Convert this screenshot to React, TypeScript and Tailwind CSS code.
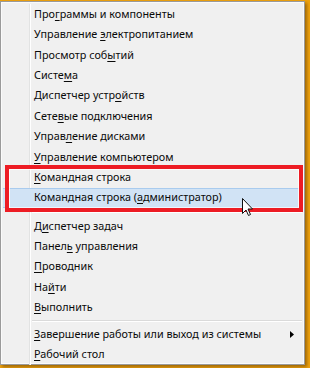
import React from "react";

type Item = { pre: string; key: string; post: string; hot?: boolean; sub?: boolean };

const group1: Item[] = [
  { pre: "Про", key: "г", post: "раммы и компоненты" },
  { pre: "Управление ", key: "э", post: "лектропитанием" },
  { pre: "Просмотр соб", key: "ы", post: "тий" },
  { pre: "Систе", key: "м", post: "а" },
  { pre: "Диспетчер устр", key: "о", post: "йств" },
  { pre: "Сете", key: "в", post: "ые подключения" },
  { pre: "Управ", key: "л", post: "ение дисками" },
  { pre: "", key: "У", post: "правление компьютером" },
  { pre: "", key: "К", post: "омандная строка" },
  { pre: "Командная строка (", key: "а", post: "дминистратор)", hot: true },
];

const group2: Item[] = [
  { pre: "Д", key: "и", post: "спетчер задач" },
  { pre: "Панел", key: "ь", post: " управления" },
  { pre: "", key: "П", post: "роводник" },
  { pre: "На", key: "й", post: "ти" },
  { pre: "", key: "В", post: "ыполнить" },
];

const group3: Item[] = [
  { pre: "", key: "З", post: "авершение работы или выход из системы", sub: true },
  { pre: "", key: "Р", post: "абочий стол" },
];

function Row({ item }: { item: Item }) {
  return (
    <div
      className={
        "flex h-[20.4px] items-center " +
        (item.hot ? "bg-[#d1e3f5] border-y border-[#a9cbee]" : "")
      }
    >
      <div
        className={
          "w-[27px] h-full shrink-0 border-r " +
          (item.hot ? "border-transparent" : "border-[#e2e3e3] shadow-[1px_0_0_#ffffff]")
        }
      />
      <span className="pl-[4px] flex-1 whitespace-nowrap">
        {item.pre}
        <span className="underline underline-offset-[2px]">{item.key}</span>
        {item.post}
      </span>
      {item.sub && (
        <svg width="4" height="7" viewBox="0 0 4 7" className="mr-[8px]">
          <path d="M0 0 L4 3.5 L0 7 Z" fill="#000" />
        </svg>
      )}
    </div>
  );
}

function Separator({ h }: { h: string }) {
  return (
    <div className={"flex " + h}>
      <div className="w-[27px] shrink-0 border-r border-[#e2e3e3] shadow-[1px_0_0_#ffffff]" />
      <div className="flex-1 flex flex-col justify-center pl-[2px]">
        <div className="h-px bg-[#dadada]" />
        <div className="h-px bg-white" />
      </div>
    </div>
  );
}

export default function App() {
  return (
    <div className="relative w-[310px] h-[368px] overflow-hidden bg-[#eea20e] pt-[1px]">
      <div
        className="w-[305px] h-[364px] bg-[#f0f0f0] border border-[#9a9a9a] p-[2px] shadow-[2px_2px_3px_rgba(60,30,0,0.45),inset_0_0_0_1px_#fafafa] text-[10.8px] text-[#0a0a0a] leading-none"
        style={{ fontFamily: '"Segoe UI", "Noto Sans", "Open Sans", sans-serif' }}
      >
        {group1.map((it, i) => (
          <Row key={"a" + i} item={it} />
        ))}
        <Separator h="h-[8px]" />
        {group2.map((it, i) => (
          <Row key={"b" + i} item={it} />
        ))}
        <Separator h="h-[6px]" />
        {group3.map((it, i) => (
          <Row key={"c" + i} item={it} />
        ))}
      </div>

      {/* red highlight frame */}
      <div className="absolute left-[5px] top-[165px] w-[298px] h-[47px] border-4 border-[#ed1c24] shadow-[inset_0_0_0_1px_rgba(255,255,255,0.8)]" />

      {/* mouse cursor */}
      <svg
        className="absolute left-[242px] top-[198px]"
        width="12"
        height="19"
        viewBox="0 0 12 19"
      >
        <path
          d="M0.5 0.5 L0.5 15.5 L4 12 L6.5 17.5 L8.5 16.5 L6 11 L10.5 11 Z"
          fill="#fff"
          stroke="#111"
          strokeWidth="1"
          strokeLinejoin="miter"
        />
      </svg>
    </div>
  );
}
